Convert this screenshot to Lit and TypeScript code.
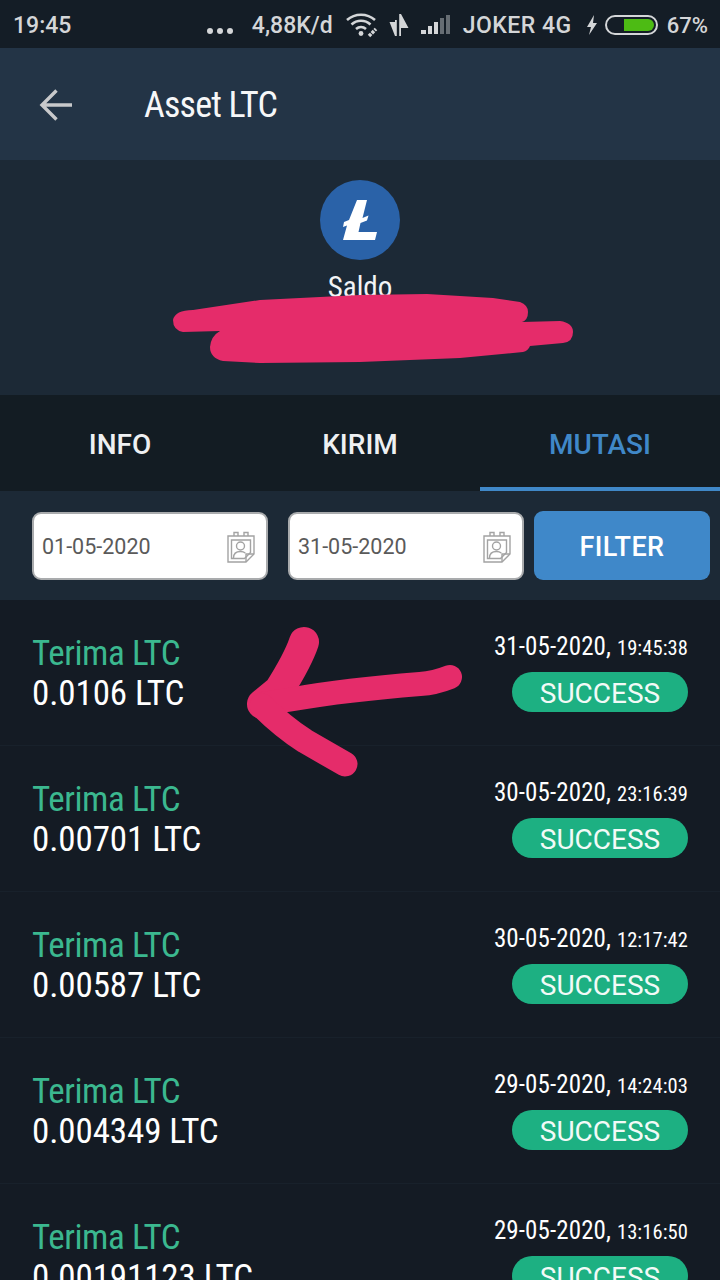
import { LitElement, html, css, svg } from 'lit';
import { customElement, state } from 'lit/decorators.js';

const calendarIcon = html`
  <svg class="cal" viewBox="0 0 28 32" fill="none" stroke="#a3a3a3" stroke-width="1.4">
    <path d="M1 5h26v18l-8 8H1z" />
    <path d="M7 5V1.5h4V5M17 5V1.5h4V5" />
    <path d="M4.5 9h19v12.5l-6 6h-13z" />
    <circle cx="13.5" cy="15" r="4" />
    <path d="M6.5 27c0-4.5 3-6.5 7-6.5 2 0 3.6.5 4.8 1.5" />
    <path d="M27 23h-8v8" />
  </svg>
`;

@customElement('app-root')
export class AppRoot extends LitElement {
  @state() private rows = [
    { amount: '0.0106 LTC', date: '31-05-2020', time: '19:45:38' },
    { amount: '0.00701 LTC', date: '30-05-2020', time: '23:16:39' },
    { amount: '0.00587 LTC', date: '30-05-2020', time: '12:17:42' },
    { amount: '0.004349 LTC', date: '29-05-2020', time: '14:24:03' },
    { amount: '0.00191123 LTC', date: '29-05-2020', time: '13:16:50' },
  ];

  static styles = css`
    :host {
      display: block;
      position: relative;
      width: 720px;
      height: 1280px;
      overflow: hidden;
      background: #141b24;
      font-family: 'Roboto', sans-serif;
      color: #fff;
    }
    .status {
      height: 48px;
      background: #141d26;
      display: flex;
      align-items: center;
      padding: 2px 12px 0 13px;
      color: #d4d6d8;
      font-size: 23px;
      font-weight: 500;
      box-sizing: border-box;
    }
    .status .time { flex: 1; }
    .status .dots { display: flex; gap: 4px; margin-right: 19px; padding-top: 11px; }
    .status .dots i { width: 6px; height: 6px; border-radius: 50%; background: #d4d6d8; }
    .status .speed { margin-right: 13px; }
    .status svg { display: block; }
    .status .carrier { margin: 0 14px 0 12px; letter-spacing: 0.5px; white-space: pre; }
    .status .pct { margin-left: 9px; font-size: 22px; }
    .appbar {
      height: 112px;
      background: #233446;
      display: flex;
      align-items: center;
      padding: 2px 0 0 39px;
      box-sizing: border-box;
    }
    .appbar svg { width: 34px; height: 34px; margin-right: 71px; }
    .narrow { font-family: 'Liberation Sans Narrow', 'Roboto Condensed', 'Roboto', sans-serif; }
    .appbar .title { font-size: 36px; letter-spacing: -0.8px; color: #f6f7f8; }
    .balance {
      height: 235px;
      background: #1c2936;
      display: flex;
      flex-direction: column;
      align-items: center;
      padding-top: 20px;
      box-sizing: border-box;
    }
    .coin { width: 80px; height: 80px; display: block; }
    .balance .label { font-size: 29px; margin-top: 9px; color: #f2f4f6; line-height: 36px; }
    .tabs {
      height: 96px;
      background: #131c23;
      display: grid;
      grid-template-columns: repeat(3, 1fr);
    }
    .tab {
      display: flex;
      align-items: center;
      justify-content: center;
      font-size: 28px;
      font-weight: 500;
      color: #eef0f2;
      box-sizing: border-box;
      padding-top: 2px;
    }
    .tab.active { color: #4088c8; border-bottom: 4px solid #4088c8; padding-top: 6px; }
    .filter {
      height: 109px;
      background: #1c2936;
      display: flex;
      align-items: center;
      padding: 0 10px 0 32px;
      box-sizing: border-box;
    }
    .date-input {
      width: 236px;
      height: 68px;
      background: #fff;
      border: 2px solid #a9abad;
      border-radius: 9px;
      box-sizing: border-box;
      display: flex;
      align-items: center;
      justify-content: space-between;
      padding: 2px 11px 0 8px;
      color: #5a5a5a;
      font-size: 21.5px;
      margin-right: 20px;
    }
    .date-input.last { margin-right: 10px; }
    .cal { width: 28px; height: 32px; display: block; }
    .filter-btn {
      flex: 1;
      height: 69px;
      background: #3f88c9;
      border-radius: 9px;
      display: flex;
      align-items: center;
      justify-content: center;
      padding-top: 2px;
      box-sizing: border-box;
      font-size: 27px;
      font-weight: 500;
      letter-spacing: 0.4px;
    }
    .row {
      height: 146px;
      box-sizing: border-box;
      border-bottom: 1px solid #18212b;
      display: flex;
      justify-content: space-between;
      padding: 33px 32px 0;
    }
    .row .type { font-size: 35px; line-height: 41px; color: #3bb88f; letter-spacing: -0.4px; }
    .row .amount { font-size: 35px; line-height: 40px; color: #fff; letter-spacing: -0.1px; }
    .row .right { display: flex; flex-direction: column; align-items: flex-end; }
    .row .stamp { font-size: 25px; line-height: 28px; height: 39px; white-space: pre; letter-spacing: 0.1px; }
    .row .stamp span { font-size: 20.5px; }
    .pill {
      width: 176px;
      height: 40px;
      border-radius: 20px;
      background: #1db082;
      display: flex;
      align-items: center;
      justify-content: center;
      padding-top: 2px;
      box-sizing: border-box;
      font-size: 28px;
      color: #f2faf7;
    }
    .scribble {
      position: absolute;
      left: 0;
      top: 0;
      width: 720px;
      height: 1280px;
      pointer-events: none;
    }
  `;

  render() {
    return html`
      <div class="status">
        <span class="time">19:45</span>
        <span class="dots"><i></i><i></i><i></i></span>
        <span class="speed">4,88K/d</span>
        <svg width="32" height="26" viewBox="0 0 32 26" fill="none" stroke="#d4d6d8" stroke-width="2.6">
          <path d="M1 8C9 1 21 1 29 8M5.500 12.500c5.500-5 13.500-5 19 0M10 17c3-2.600 7-2.600 10 0" />
          <circle cx="15" cy="21.500" r="2.400" fill="#d4d6d8" stroke="none" />
          <path d="M23 24l7-7" stroke-width="3.5" stroke-dasharray="3 1" />
        </svg>
        <svg style="margin-left:9px" width="22" height="24" viewBox="0 0 22 24" fill="#d4d6d8">
          <path d="M8 23V9H2.500L8 23zM14 1v14h7.500L14 1z" />
          <path d="M8 23V7h1.800v16zM12.200 1H14v22h-1.800z" />
        </svg>
        <svg style="margin-left:12px" width="30" height="22" viewBox="0 0 30 22">
          <rect x="0" y="16" width="5" height="4" fill="#d4d6d8" />
          <rect x="7" y="12" width="4" height="8" fill="#d4d6d8" />
          <rect x="13" y="8" width="4" height="12" fill="#d4d6d8" />
          <rect x="19" y="4" width="4" height="16" fill="#666d73" />
          <rect x="25" y="1" width="4" height="19" fill="#666d73" />
        </svg>
        <span class="carrier">JOKER 4G</span>
        <svg width="12" height="22" viewBox="0 0 12 22" fill="#d4d6d8"><path d="M8 1L1 13h4l-2 8 8-12H7z" /></svg>
        <svg style="margin-left:7px" width="53" height="20" viewBox="0 0 53 20" fill="none">
          <rect x="1" y="1" width="51" height="18" rx="9" stroke="#d4d6d8" stroke-width="2" />
          <path d="M19 4h24a6 6 0 0 1 0 12H19z" fill="#4dbb14" />
        </svg>
        <span class="pct">67%</span>
      </div>

      <div class="appbar">
        <svg viewBox="0 0 34 34" fill="none" stroke="#c8c9cb" stroke-width="3.4">
          <path d="M33 17H3M17.500 2.500L3 17l14.500 14.500" />
        </svg>
        <span class="title narrow">Asset LTC</span>
      </div>

      <div class="balance">
        <svg class="coin" viewBox="0 0 80 80">
          <circle cx="40" cy="40" r="40" fill="#2a62a8" />
          <path d="M37 20h10l-4.500 18 6-2.500-1.500 5-6.500 2.500-2 9H57l-2 8H23l4-14.500-4 1.500 1-5 5-2z" fill="#fff" />
        </svg>
        <span class="label narrow">Saldo</span>
      </div>

      <div class="tabs">
        <div class="tab">INFO</div>
        <div class="tab">KIRIM</div>
        <div class="tab active">MUTASI</div>
      </div>

      <div class="filter">
        <div class="date-input"><span>01-05-2020</span>${calendarIcon}</div>
        <div class="date-input last"><span>31-05-2020</span>${calendarIcon}</div>
        <div class="filter-btn">FILTER</div>
      </div>

      ${this.rows.map(
        (r) => html`
          <div class="row">
            <div class="narrow">
              <div class="type">Terima LTC</div>
              <div class="amount">${r.amount}</div>
            </div>
            <div class="right">
              <div class="stamp narrow">${r.date}, <span>${r.time}</span></div>
              <div class="pill">SUCCESS</div>
            </div>
          </div>
        `
      )}

      <svg class="scribble" viewBox="0 0 720 1280">
        ${svg`
          <path fill="#e52c6a" d="M173 320Q175 310 193 310L260 300L360 295L427 294L493 298L520 302Q528 305 528 312Q528 320 522 322L560 321Q573 323 573 332Q573 342 563 343L530 346Q528 351 523 352L460 358L360 362L260 363L223 361Q210 358 210 347Q211 336 220 331L183 332Q173 330 173 320Z" />
          <g fill="none" stroke="#e52c6a" stroke-linecap="round" stroke-linejoin="round">
            <path stroke-width="30" d="M304 642Q298 660 279 690L262 704" />
            <path stroke-width="24" d="M262 704L294 699Q345 690 420 684Q435 683 450 677" />
            <path stroke-width="25" d="M262 706Q282 726 305 741L345 764" />
          </g>
        `}
      </svg>
    `;
  }
}

declare global {
  interface HTMLElementTagNameMap {
    'app-root': AppRoot;
  }
}
